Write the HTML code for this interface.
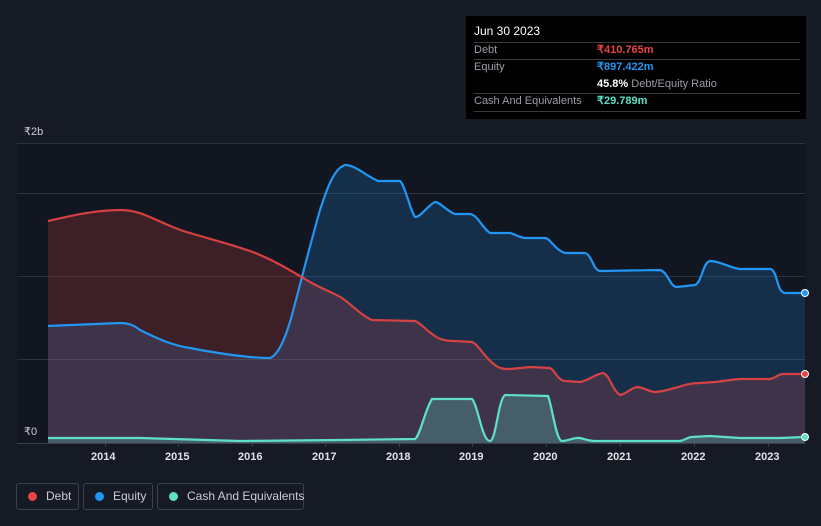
<!DOCTYPE html>
<html><head><meta charset="utf-8"><style>
html,body{margin:0;width:821px;height:526px;overflow:hidden}
body{background:#151a24;font-family:"Liberation Sans",sans-serif;position:relative}
.tip{position:absolute;left:466px;top:16px;width:340px;height:103px;background:#000;color:#fff;font-size:11px;white-space:nowrap}
.tip div{line-height:16px}
.tip .r{position:absolute;left:8px;right:6px;border-top:1px solid #3a3a3a;height:0}
.lab{position:absolute;color:#9a9ea6;font-size:11px}
.leg{position:absolute;top:483px;height:27px;border:1px solid #3b414c;border-radius:3px;color:#c9ccd2;font-size:12px;line-height:25px;box-sizing:border-box;white-space:nowrap}
.leg i{display:inline-block;width:9px;height:9px;border-radius:50%;margin:0 9px 0 11px;vertical-align:-1px}
.ax{position:absolute;top:451px;color:#e0e2e6;font-size:11px;font-weight:bold}
</style></head><body>
<svg width="821" height="526" style="position:absolute;left:0;top:0">
<rect x="17" y="143" width="788" height="300" fill="#121620"/>
<g stroke="#2d333d" stroke-width="1"><line x1="17" y1="143.5" x2="805" y2="143.5"/><line x1="17" y1="193.5" x2="805" y2="193.5"/><line x1="17" y1="276.5" x2="805" y2="276.5"/><line x1="17" y1="359.5" x2="805" y2="359.5"/></g>
<g stroke="#3a404a"><line x1="17" y1="443.5" x2="805" y2="443.5"/><line x1="105.5" y1="443" x2="105.5" y2="447"/><line x1="178.5" y1="443" x2="178.5" y2="447"/><line x1="252.5" y1="443" x2="252.5" y2="447"/><line x1="325.5" y1="443" x2="325.5" y2="447"/><line x1="399.5" y1="443" x2="399.5" y2="447"/><line x1="472.5" y1="443" x2="472.5" y2="447"/><line x1="546.5" y1="443" x2="546.5" y2="447"/><line x1="620.5" y1="443" x2="620.5" y2="447"/><line x1="694.5" y1="443" x2="694.5" y2="447"/><line x1="768.5" y1="443" x2="768.5" y2="447"/></g>
<path d="M48,326 L120,323 C130,323 135,326 140,330 C160,340 175,346 190,348 C210,352 230,355 250,357 C262,358 268,358 270,358 C278,355 285,340 292,315 C300,285 310,245 320,210 C328,185 335,168 345,165 C355,165 365,175 378,181 L400,181 C405,185 410,210 415,217 C420,218 428,205 435,202 C440,202 448,212 455,214 L470,214 C478,215 482,228 490,233 L510,233 C515,234 520,238 525,238 L545,238 C550,238 555,250 565,253 L585,253 C592,255 593,270 600,271 L660,270 C668,272 670,287 677,287 L695,285 C702,282 703,262 710,261 C720,261 730,268 740,269 L770,269 C778,270 776,292 785,293 L805,293 L805,443 L48,443 Z" fill="#2196f3" fill-opacity="0.2"/>
<path d="M48,221 C70,216 95,210 120,210 C132,210 140,213 145,215 C160,221 175,229 190,233 C210,239 230,244 250,251 C270,258 290,270 310,282 C320,288 332,292 342,298 C352,305 362,316 372,320 L415,321 C420,322 425,330 438,338 C445,341 450,341 455,341 L472,342 C478,344 485,358 495,365 C500,369 505,369 510,369 L530,367 L550,368 C555,370 557,380 565,381 L580,382 C590,380 595,374 603,373 C610,375 612,390 620,395 C628,393 632,387 638,387 C645,388 650,392 655,392 C665,391 670,389 675,388 C685,385 690,383 700,383 L715,382 C725,381 735,379 740,379 L770,379 C776,378 778,374 783,374 L805,374 L805,443 L48,443 Z" fill="#e84545" fill-opacity="0.2"/>
<path d="M48,438 L140,438 L240,441 L340,440 L415,439 C420,436 425,410 432,399 L472,399 C478,405 482,441 490,441 C496,441 498,400 505,395 L548,396 C552,405 556,441 562,441 C568,441 575,437 580,438 C585,439 588,441 595,441 L680,441 C685,440 688,437 692,437 L710,436 L740,438 L780,438 L805,437 L805,443 L48,443 Z" fill="#5ee0c8" fill-opacity="0.25"/>
<path d="M48,326 L120,323 C130,323 135,326 140,330 C160,340 175,346 190,348 C210,352 230,355 250,357 C262,358 268,358 270,358 C278,355 285,340 292,315 C300,285 310,245 320,210 C328,185 335,168 345,165 C355,165 365,175 378,181 L400,181 C405,185 410,210 415,217 C420,218 428,205 435,202 C440,202 448,212 455,214 L470,214 C478,215 482,228 490,233 L510,233 C515,234 520,238 525,238 L545,238 C550,238 555,250 565,253 L585,253 C592,255 593,270 600,271 L660,270 C668,272 670,287 677,287 L695,285 C702,282 703,262 710,261 C720,261 730,268 740,269 L770,269 C778,270 776,292 785,293 L805,293" fill="none" stroke="#2196f3" stroke-width="2.2"/>
<path d="M48,221 C70,216 95,210 120,210 C132,210 140,213 145,215 C160,221 175,229 190,233 C210,239 230,244 250,251 C270,258 290,270 310,282 C320,288 332,292 342,298 C352,305 362,316 372,320 L415,321 C420,322 425,330 438,338 C445,341 450,341 455,341 L472,342 C478,344 485,358 495,365 C500,369 505,369 510,369 L530,367 L550,368 C555,370 557,380 565,381 L580,382 C590,380 595,374 603,373 C610,375 612,390 620,395 C628,393 632,387 638,387 C645,388 650,392 655,392 C665,391 670,389 675,388 C685,385 690,383 700,383 L715,382 C725,381 735,379 740,379 L770,379 C776,378 778,374 783,374 L805,374" fill="none" stroke="#e84545" stroke-width="2.2" stroke-opacity="0.9"/>
<path d="M48,438 L140,438 L240,441 L340,440 L415,439 C420,436 425,410 432,399 L472,399 C478,405 482,441 490,441 C496,441 498,400 505,395 L548,396 C552,405 556,441 562,441 C568,441 575,437 580,438 C585,439 588,441 595,441 L680,441 C685,440 688,437 692,437 L710,436 L740,438 L780,438 L805,437" fill="none" stroke="#5ee0c8" stroke-width="2.2"/>
<circle cx="805" cy="293" r="3.5" fill="#2196f3" stroke="#fff" stroke-width="1"/>
<circle cx="805" cy="374" r="3.5" fill="#e84545" stroke="#fff" stroke-width="1"/>
<circle cx="805" cy="437" r="3.5" fill="#5ee0c8" stroke="#fff" stroke-width="1"/>
</svg>
<div class="lab" style="left:24px;top:125px;color:#c9ccd2">₹2b</div>
<div class="lab" style="left:24px;top:425px;color:#c9ccd2">₹0</div>
<div class="ax" style="left:91px">2014</div><div class="ax" style="left:165px">2015</div><div class="ax" style="left:238px">2016</div><div class="ax" style="left:312px">2017</div><div class="ax" style="left:386px">2018</div><div class="ax" style="left:459px">2019</div><div class="ax" style="left:533px">2020</div><div class="ax" style="left:607px">2021</div><div class="ax" style="left:681px">2022</div><div class="ax" style="left:755px">2023</div>
<div class="tip">
<div style="position:absolute;left:8px;top:7px;font-size:12px">Jun 30 2023</div>
<div class="r" style="top:26px"></div>
<div class="lab" style="left:8px;top:26px">Debt</div><div style="position:absolute;left:131px;top:26px;color:#e84545;font-weight:bold">₹410.765m</div>
<div class="r" style="top:43px"></div>
<div class="lab" style="left:8px;top:43px">Equity</div><div style="position:absolute;left:131px;top:43px;color:#2196f3;font-weight:bold">₹897.422m</div>
<div style="position:absolute;left:131px;top:60px"><b>45.8%</b> <span style="color:#9a9ea6">Debt/Equity Ratio</span></div>
<div class="r" style="top:77px"></div>
<div class="lab" style="left:8px;top:77px">Cash And Equivalents</div><div style="position:absolute;left:131px;top:77px;color:#5ee0c8;font-weight:bold">₹29.789m</div>
<div class="r" style="top:95px"></div>
</div>
<div class="leg" style="left:16px;width:63px"><i style="background:#e84545"></i>Debt</div>
<div class="leg" style="left:83px;width:70px"><i style="background:#2196f3"></i>Equity</div>
<div class="leg" style="left:157px;width:147px"><i style="background:#5ee0c8"></i>Cash And Equivalents</div>
</body></html>
